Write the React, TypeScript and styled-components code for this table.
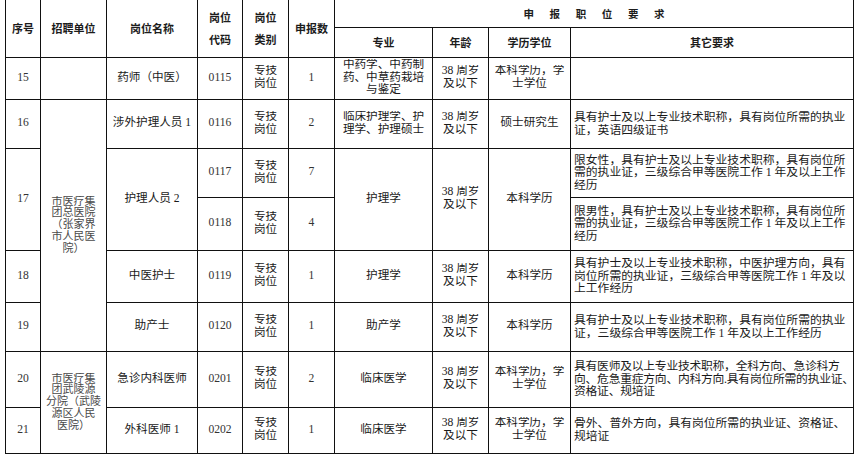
import styled, { createGlobalStyle } from "styled-components";

const GlobalStyle = createGlobalStyle`
  html, body {
    margin: 0;
    padding: 0;
    background: #fff;
  }
  body {
    font-family: "Liberation Serif", "Noto Sans CJK SC", serif;
    color: #1a1a1a;
  }
`;

const Page = styled.div`
  padding: 0 0 0 5px;
  width: 864px;
  height: 463px;
  box-sizing: border-box;
  overflow: hidden;
`;

const Table = styled.table`
  border-collapse: collapse;
  table-layout: fixed;
  width: 849px;
`;

const Row = styled.tr<{ $h: number }>`
  height: ${({ $h }) => $h}px;
`;

const HeadCell = styled.th<{ $top?: boolean; $tall?: boolean }>`
  border: 1px solid #111;
  border-top: ${({ $top }) => ($top ? "none" : "1px solid #111")};
  padding: 0;
  font-family: "Noto Sans CJK SC", sans-serif;
  font-size: 11px;
  font-weight: 700;
  line-height: ${({ $tall }) => ($tall ? "22px" : "12px")};
  color: #1c1c1c;
  text-align: center;
  vertical-align: middle;
`;

const BannerText = styled.span`
  font-size: 10.5px;
  letter-spacing: 15.6px;
  margin-right: -15.6px;
`;

const Cell = styled.td<{ $align?: "left" | "center"; $kind?: "num" | "unit" | "req"; $tight?: boolean }>`
  border: 1px solid #111;
  padding: ${({ $kind }) => ($kind === "req" ? "0 0 0 3px" : "0 1px")};
  font-size: ${({ $kind }) => ($kind === "req" ? "11.8px" : $kind === "unit" ? "11px" : "11.6px")};
  letter-spacing: ${({ $tight }) => ($tight ? "-0.25px" : "0")};
  line-height: ${({ $kind }) => ($kind === "unit" ? "11.8px" : "12.6px")};
  color: ${({ $kind }) => ($kind === "unit" ? "#4a4a4a" : $kind === "num" ? "#333" : "#1a1a1a")};
  text-align: ${({ $align }) => $align ?? "center"};
  vertical-align: middle;
  white-space: nowrap;
`;

const Clip = styled.div`
  overflow: hidden;
`;

const Lines = ({ text }: { text: string }) => (
  <Clip>
    {text.split("\n").map((line, i) => (
      <div key={i}>{line}</div>
    ))}
  </Clip>
);

const widths = [35, 66, 91, 45, 46, 46, 98, 56, 82, 283];

const TYPE = "专技\n岗位";
const AGE = "38 周岁\n及以下";

export default function App() {
  return (
    <Page>
      <GlobalStyle />
      <Table>
        <colgroup>
          {widths.map((w, i) => (
            <col key={i} style={{ width: w }} />
          ))}
        </colgroup>
        <thead>
          <Row $h={27}>
            <HeadCell $top rowSpan={2}>序号</HeadCell>
            <HeadCell $top rowSpan={2}>招聘单位</HeadCell>
            <HeadCell $top rowSpan={2}>岗位名称</HeadCell>
            <HeadCell $top $tall rowSpan={2}>
              <Lines text={"岗位\n代码"} />
            </HeadCell>
            <HeadCell $top $tall rowSpan={2}>
              <Lines text={"岗位\n类别"} />
            </HeadCell>
            <HeadCell $top rowSpan={2}>申报数</HeadCell>
            <HeadCell $top colSpan={4}>
              <BannerText>申报职位要求</BannerText>
            </HeadCell>
          </Row>
          <Row $h={30}>
            <HeadCell>专业</HeadCell>
            <HeadCell>年龄</HeadCell>
            <HeadCell>学历学位</HeadCell>
            <HeadCell>其它要求</HeadCell>
          </Row>
        </thead>
        <tbody>
          <Row $h={42}>
            <Cell $kind="num">15</Cell>
            <Cell />
            <Cell>药师（中医）</Cell>
            <Cell $kind="num">0115</Cell>
            <Cell><Lines text={TYPE} /></Cell>
            <Cell $kind="num">1</Cell>
            <Cell><Lines text={"中药学、中药制\n药、中草药栽培\n与鉴定"} /></Cell>
            <Cell><Lines text={AGE} /></Cell>
            <Cell><Lines text={"本科学历，学\n士学位"} /></Cell>
            <Cell $kind="req" />
          </Row>
          <Row $h={49}>
            <Cell $kind="num">16</Cell>
            <Cell $kind="unit" rowSpan={5}>
              <Lines text={"市医疗集\n团总医院\n（张家界\n市人民医\n院）"} />
            </Cell>
            <Cell>涉外护理人员 1</Cell>
            <Cell $kind="num">0116</Cell>
            <Cell><Lines text={TYPE} /></Cell>
            <Cell $kind="num">2</Cell>
            <Cell><Lines text={"临床护理学、护\n理学、护理硕士"} /></Cell>
            <Cell><Lines text={AGE} /></Cell>
            <Cell>硕士研究生</Cell>
            <Cell $kind="req" $align="left">
              <Lines text={"具有护士及以上专业技术职称，具有岗位所需的执业\n证，英语四级证书"} />
            </Cell>
          </Row>
          <Row $h={49}>
            <Cell $kind="num" rowSpan={2}>17</Cell>
            <Cell rowSpan={2}>护理人员 2</Cell>
            <Cell $kind="num">0117</Cell>
            <Cell><Lines text={TYPE} /></Cell>
            <Cell $kind="num">7</Cell>
            <Cell rowSpan={2}>护理学</Cell>
            <Cell rowSpan={2}><Lines text={AGE} /></Cell>
            <Cell rowSpan={2}>本科学历</Cell>
            <Cell $kind="req" $align="left">
              <Lines text={"限女性，具有护士及以上专业技术职称，具有岗位所\n需的执业证，三级综合甲等医院工作 1 年及以上工作\n经历"} />
            </Cell>
          </Row>
          <Row $h={53}>
            <Cell $kind="num">0118</Cell>
            <Cell><Lines text={TYPE} /></Cell>
            <Cell $kind="num">4</Cell>
            <Cell $kind="req" $align="left">
              <Lines text={"限男性，具有护士及以上专业技术职称，具有岗位所\n需的执业证，三级综合甲等医院工作 1 年及以上工作\n经历"} />
            </Cell>
          </Row>
          <Row $h={52}>
            <Cell $kind="num">18</Cell>
            <Cell>中医护士</Cell>
            <Cell $kind="num">0119</Cell>
            <Cell><Lines text={TYPE} /></Cell>
            <Cell $kind="num">1</Cell>
            <Cell>护理学</Cell>
            <Cell><Lines text={AGE} /></Cell>
            <Cell>本科学历</Cell>
            <Cell $kind="req" $align="left">
              <Lines text={"具有护士及以上专业技术职称，中医护理方向，具有\n岗位所需的执业证，三级综合甲等医院工作 1 年及以\n上工作经历"} />
            </Cell>
          </Row>
          <Row $h={49}>
            <Cell $kind="num">19</Cell>
            <Cell>助产士</Cell>
            <Cell $kind="num">0120</Cell>
            <Cell><Lines text={TYPE} /></Cell>
            <Cell $kind="num">1</Cell>
            <Cell>助产学</Cell>
            <Cell><Lines text={AGE} /></Cell>
            <Cell>本科学历</Cell>
            <Cell $kind="req" $align="left">
              <Lines text={"具有护士及以上专业技术职称，具有岗位所需的执业\n证，三级综合甲等医院工作 1 年及以上工作经历"} />
            </Cell>
          </Row>
          <Row $h={56}>
            <Cell $kind="num">20</Cell>
            <Cell $kind="unit" rowSpan={2}>
              <Lines text={"市医疗集\n团武陵源\n分院（武陵\n源区人民\n医院）"} />
            </Cell>
            <Cell>急诊内科医师</Cell>
            <Cell $kind="num">0201</Cell>
            <Cell><Lines text={TYPE} /></Cell>
            <Cell $kind="num">2</Cell>
            <Cell>临床医学</Cell>
            <Cell><Lines text={AGE} /></Cell>
            <Cell><Lines text={"本科学历，学\n士学位"} /></Cell>
            <Cell $kind="req" $align="left" $tight>
              <Lines text={"具有医师及以上专业技术职称，全科方向、急诊科方\n向、危急重症方向、内科方向.具有岗位所需的执业证、\n资格证、规培证"} />
            </Cell>
          </Row>
          <Row $h={46}>
            <Cell $kind="num">21</Cell>
            <Cell>外科医师 1</Cell>
            <Cell $kind="num">0202</Cell>
            <Cell><Lines text={TYPE} /></Cell>
            <Cell $kind="num">1</Cell>
            <Cell>临床医学</Cell>
            <Cell><Lines text={AGE} /></Cell>
            <Cell><Lines text={"本科学历，学\n士学位"} /></Cell>
            <Cell $kind="req" $align="left">
              <Lines text={"骨外、普外方向，具有岗位所需的执业证、资格证、\n规培证"} />
            </Cell>
          </Row>
        </tbody>
      </Table>
    </Page>
  );
}
